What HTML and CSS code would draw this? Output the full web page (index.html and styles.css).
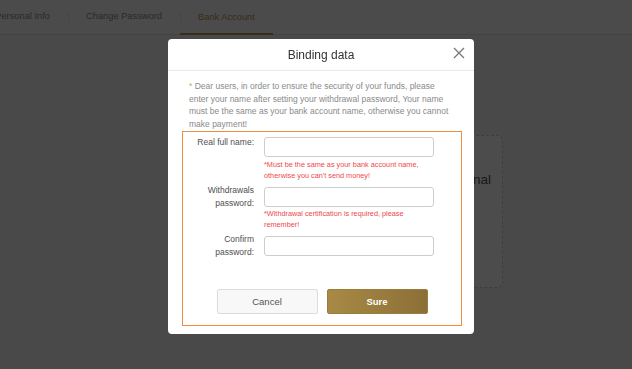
FILE: index.html
```html
<!DOCTYPE html>
<html lang="en">
<head>
  <meta charset="UTF-8">
  <meta name="viewport" content="width=device-width, initial-scale=1.0">
  <title>Bank Account</title>
  <link rel="stylesheet" href="styles.css">
</head>
<body>
  <nav class="tabs">
    <a class="tab first">Personal Info</a>
    <a class="tab">Change Password</a>
    <a class="tab active">Bank Account</a>
  </nav>

  <main class="page">
    <section class="card">
      <p class="card-title">Personal</p>
    </section>
  </main>

  <div class="overlay">
    <div class="modal">
      <div class="modal-head">
        <h3>Binding data</h3>
        <span class="close">
          <svg width="12" height="12" viewBox="0 0 12 12"><path d="M1 1 L11 11 M11 1 L1 11" stroke="#777" stroke-width="1.3" fill="none"/></svg>
        </span>
      </div>
      <div class="modal-body">
        <p class="notice"><span class="star">*</span> Dear users, in order to ensure the security of your funds, please enter your name after setting your withdrawal password, Your name must be the same as your bank account name, otherwise you cannot make payment!</p>

        <form class="bind-form">
          <div class="field">
            <label class="lbl top">Real full name:</label>
            <input type="text">
            <p class="err">*Must be the same as your bank account name, otherwise you can't send money!</p>
          </div>
          <div class="field">
            <label class="lbl">Withdrawals password:</label>
            <input type="password">
            <p class="err">*Withdrawal certification is required, please remember!</p>
          </div>
          <div class="field">
            <label class="lbl">Confirm password:</label>
            <input type="password">
          </div>
          <div class="actions">
            <button type="button" class="btn cancel">Cancel</button>
            <button type="button" class="btn sure">Sure</button>
          </div>
        </form>
      </div>
    </div>
  </div>
</body>
</html>
```

FILE: styles.css
```css
body {
  margin: 0;
  padding: 0;
  font-family: "Liberation Sans", Arial, sans-serif;
  background-color: #f6f6f6;
  width: 632px;
  height: 369px;
  overflow: hidden;
}

.tabs {
  display: flex;
  height: 34px;
  background-color: #fbfbfb;
  border-bottom: 1px solid #e2e2e2;
  margin-left: -28px;
}

.tab {
  position: relative;
  display: flex;
  align-items: center;
  padding: 0 18px;
  font-size: 9.3px;
  color: #8e8e8e;
  border-bottom: 2px solid transparent;
}

.tab.first {
  width: 60px;
  justify-content: flex-end;
}

.tab + .tab::before {
  content: "";
  position: absolute;
  left: 0;
  top: 11px;
  height: 11px;
  border-left: 1px solid #e6e6e6;
}

.tab.active {
  color: #b9965c;
  border-bottom-color: #b9965c;
  margin-bottom: -1px;
}

.page {
  display: flex;
  padding-top: 100px;
}

.card {
  margin-left: 330px;
  width: 173px;
  height: 153px;
  box-sizing: border-box;
  border: 1px dashed #cfcfcf;
  border-radius: 6px;
  background-color: #fff;
  padding: 36px 11px 0 0;
  text-align: right;
}

.card-title {
  margin: 0;
  font-size: 13.5px;
  color: #555;
}

.overlay {
  position: fixed;
  left: 0;
  top: 0;
  right: 0;
  bottom: 0;
  background-color: rgba(0, 0, 0, 0.7);
  padding: 39px 0 0 168px;
}

.modal {
  width: 306px;
  background: #fff;
  border-radius: 4px;
  padding-bottom: 8px;
}

.modal-head {
  position: relative;
  height: 31px;
  border-bottom: 1px solid #ebebeb;
  display: flex;
  align-items: center;
  justify-content: center;
}

.modal-head h3 {
  margin: 0;
  font-size: 12px;
  font-weight: normal;
  color: #333;
}

.close {
  position: absolute;
  right: 9px;
  top: 8px;
  line-height: 0;
}

.modal-body {
  padding: 9px 12px 0 14px;
}

.notice {
  width: 266px;
  margin: 0 0 1px 7px;
  font-size: 8.5px;
  line-height: 12.5px;
  color: #8a8a8a;
}

.star {
  color: #b5b25e;
}

.bind-form {
  border: 1.5px solid #ef8d45;
  padding: 5px 0 11px 0;
}

.field {
  display: grid;
  grid-template-columns: 64px 170px;
  column-gap: 10px;
  padding-left: 7px;
  margin-bottom: 6px;
}

.lbl {
  height: 20px;
  display: flex;
  flex-direction: column;
  justify-content: center;
  text-align: right;
  font-size: 8.5px;
  line-height: 13px;
  color: #4f4f4f;
}

.lbl.top {
  justify-content: flex-start;
  margin-top: -1px;
}

.field input {
  height: 20px;
  box-sizing: border-box;
  border: 1px solid #cdcdcd;
  border-radius: 3px;
  margin: 0;
}

.err {
  grid-column: 2;
  margin: 1.5px 0 0 0;
  font-size: 7.3px;
  line-height: 11px;
  color: #f0484b;
}

.actions {
  display: flex;
  justify-content: center;
  gap: 9px;
  margin-top: 33px;
}

.btn {
  width: 101px;
  height: 25px;
  border-radius: 2px;
  font-family: "Liberation Sans", Arial, sans-serif;
  font-size: 9.5px;
  cursor: pointer;
}

.cancel {
  background: #f8f8f8;
  border: 1px solid #dcdcdc;
  color: #555;
}

.sure {
  background: linear-gradient(to right, #a88a45, #8c6f36);
  border: 1px solid #9a7c3d;
  color: #fff;
  font-weight: 600;
}
```
